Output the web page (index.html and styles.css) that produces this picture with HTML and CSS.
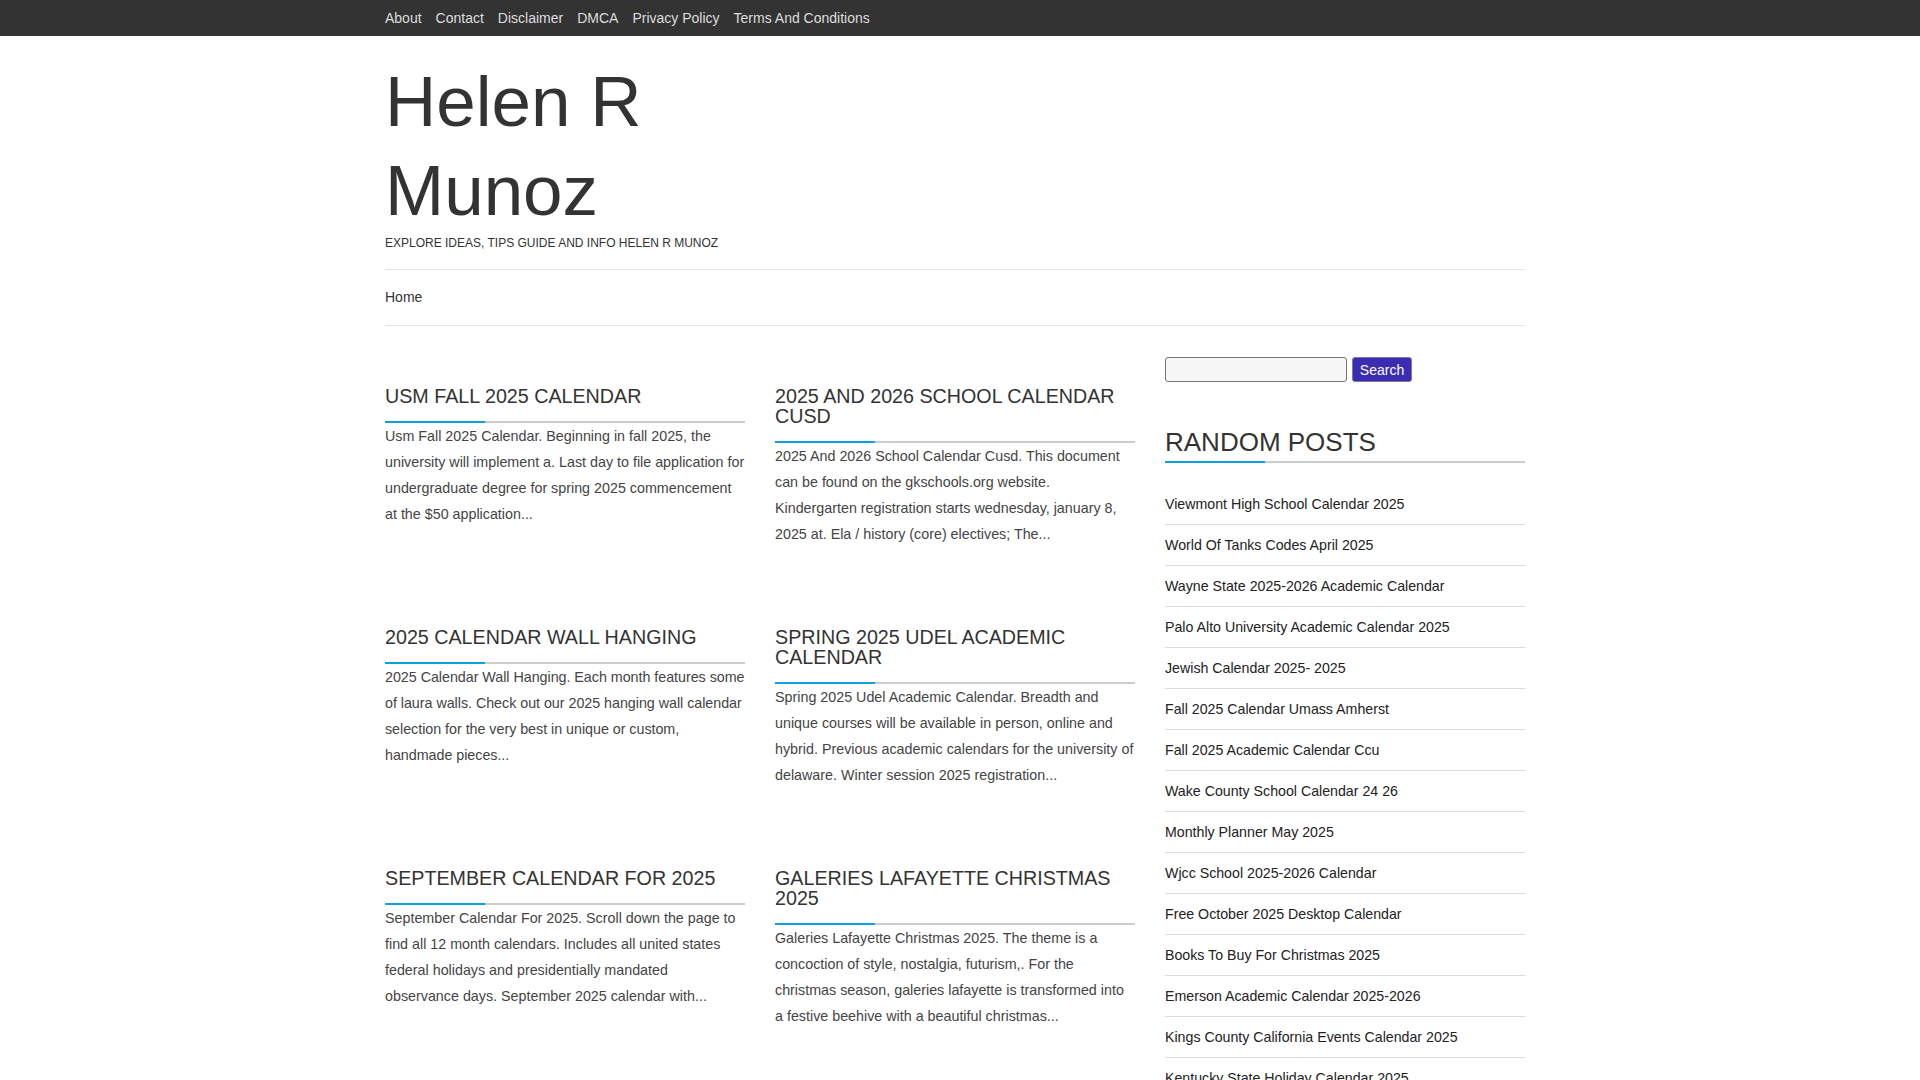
FILE: index.html
```html
<!DOCTYPE html>
<html lang="en">
<head>
<meta charset="utf-8">
<title>Helen R Munoz</title>
<link rel="stylesheet" href="styles.css">
</head>
<body>
<div class="topbar">
  <div class="container topnav">
    <a href="#">About</a>
    <a href="#">Contact</a>
    <a href="#">Disclaimer</a>
    <a href="#">DMCA</a>
    <a href="#">Privacy Policy</a>
    <a href="#">Terms And Conditions</a>
  </div>
</div>
<div class="container">
  <header class="site-header">
    <h1 class="site-title"><a href="#">Helen R Munoz</a></h1>
    <p class="tagline">Explore Ideas, Tips Guide and Info Helen R Munoz</p>
  </header>
  <nav class="mainnav"><a href="#">Home</a></nav>
  <div class="layout">
    <main class="posts">
      <article class="post">
        <h2 class="post-title"><a href="#">Usm Fall 2025 Calendar</a></h2>
        <p class="excerpt">Usm Fall 2025 Calendar. Beginning in fall 2025, the university will implement a. Last day to file application for undergraduate degree for spring 2025 commencement at the $50 application...</p>
      </article>
      <article class="post">
        <h2 class="post-title"><a href="#">2025 And 2026 School Calendar Cusd</a></h2>
        <p class="excerpt">2025 And 2026 School Calendar Cusd. This document can be found on the gkschools.org website. Kindergarten registration starts wednesday, january 8, 2025 at. Ela / history (core) electives; The...</p>
      </article>
      <article class="post">
        <h2 class="post-title"><a href="#">2025 Calendar Wall Hanging</a></h2>
        <p class="excerpt excerpt-tight">2025 Calendar Wall Hanging. Each month features some of laura walls. Check out our 2025 hanging wall calendar selection for the very best in unique or custom, handmade pieces...</p>
      </article>
      <article class="post">
        <h2 class="post-title"><a href="#">Spring 2025 Udel Academic Calendar</a></h2>
        <p class="excerpt">Spring 2025 Udel Academic Calendar. Breadth and unique courses will be available in person, online and hybrid. Previous academic calendars for the university of delaware. Winter session 2025 registration...</p>
      </article>
      <article class="post">
        <h2 class="post-title"><a href="#">September Calendar For 2025</a></h2>
        <p class="excerpt">September Calendar For 2025. Scroll down the page to find all 12 month calendars. Includes all united states federal holidays and presidentially mandated observance days. September 2025 calendar with...</p>
      </article>
      <article class="post">
        <h2 class="post-title"><a href="#">Galeries Lafayette Christmas 2025</a></h2>
        <p class="excerpt">Galeries Lafayette Christmas 2025. The theme is a concoction of style, nostalgia, futurism,. For the christmas season, galeries lafayette is transformed into a festive beehive with a beautiful christmas...</p>
      </article>
    </main>
    <aside class="sidebar">
      <form class="search">
        <input class="search-input" type="text" aria-label="Search">
        <button class="search-btn" type="button">Search</button>
      </form>
      <h3 class="widget-title">Random Posts</h3>
      <ul class="random">
        <li><a href="#">Viewmont High School Calendar 2025</a></li>
        <li><a href="#">World Of Tanks Codes April 2025</a></li>
        <li><a href="#">Wayne State 2025-2026 Academic Calendar</a></li>
        <li><a href="#">Palo Alto University Academic Calendar 2025</a></li>
        <li><a href="#">Jewish Calendar 2025- 2025</a></li>
        <li><a href="#">Fall 2025 Calendar Umass Amherst</a></li>
        <li><a href="#">Fall 2025 Academic Calendar Ccu</a></li>
        <li><a href="#">Wake County School Calendar 24 26</a></li>
        <li><a href="#">Monthly Planner May 2025</a></li>
        <li><a href="#">Wjcc School 2025-2026 Calendar</a></li>
        <li><a href="#">Free October 2025 Desktop Calendar</a></li>
        <li><a href="#">Books To Buy For Christmas 2025</a></li>
        <li><a href="#">Emerson Academic Calendar 2025-2026</a></li>
        <li><a href="#">Kings County California Events Calendar 2025</a></li>
        <li><a href="#">Kentucky State Holiday Calendar 2025</a></li>
        <li><a href="#">Printable 2025 Yearly Calendar</a></li>
      </ul>
    </aside>
  </div>
</div>
</body>
</html>
```
FILE: styles.css
```css
* { box-sizing: border-box; }
html, body { margin: 0; padding: 0; }
body {
  font-family: "Liberation Sans", Arial, sans-serif;
  font-size: 14px;
  color: #333;
  background: #fff;
  padding-right: 10px;
}
a { text-decoration: none; color: inherit; }

.container {
  width: 1140px;
  margin: 0 auto;
}

.topbar {
  background: #333;
  height: 36px;
  margin-right: -10px;
  padding-right: 10px;
}
.topnav {
  display: flex;
  gap: 14px;
  line-height: 36px;
  font-size: 14px;
}
.topnav a { color: #ddd; }

.site-header {
  padding: 21px 0 18px;
  border-bottom: 1px solid #e5e5e5;
}
.site-title {
  margin: 0;
  max-width: 380px;
  font-size: 71px;
  line-height: 89px;
  font-weight: normal;
  color: #333;
}
.tagline {
  margin: 0;
  font-size: 12px;
  line-height: 16px;
  text-transform: uppercase;
  color: #333;
}

.mainnav {
  padding: 17px 0;
  line-height: 21px;
  font-size: 14px;
  border-bottom: 1px solid #e5e5e5;
}
.mainnav a { color: #333; }

.layout {
  display: grid;
  grid-template-columns: 750px 360px;
  column-gap: 30px;
  padding-top: 31px;
  align-items: start;
}

.posts {
  display: grid;
  grid-template-columns: 360px 360px;
  column-gap: 30px;
  row-gap: 80px;
  margin-top: 29px;
  align-items: start;
}
.post-title,
.widget-title {
  margin: 0;
  font-weight: normal;
  text-transform: uppercase;
  color: #333;
  background-image: linear-gradient(#0ea1df, #0ea1df), linear-gradient(#ccc, #ccc);
  background-repeat: no-repeat;
  background-position: left bottom, left bottom;
  background-size: 100px 2px, 100% 2px;
}
.post-title {
  font-size: 19.7px;
  line-height: 20px;
  padding-bottom: 17px;
}
.excerpt {
  margin: 0;
  font-size: 14.3px;
  line-height: 26px;
  color: #444;
}
.excerpt-tight {
  letter-spacing: -0.03px;
}

.search {
  display: flex;
  gap: 5px;
  margin: 0;
}
.search-input {
  width: 182px;
  height: 25px;
  border: 1px solid #767676;
  border-radius: 3px;
  background: #f7f7f7;
  font-family: inherit;
  font-size: 14px;
  padding: 0 4px;
}
.search-btn {
  width: 60px;
  height: 25px;
  border: 1px solid #7a7a9a;
  border-radius: 3px;
  background: #3a2db4;
  color: #fff;
  font-family: "Liberation Sans", Arial, sans-serif;
  font-size: 14px;
  padding: 0;
}

.widget-title {
  margin-top: 46px;
  font-size: 26px;
  line-height: 28px;
  padding-bottom: 7px;
}
.random {
  list-style: none;
  margin: 21px 0 0;
  padding: 0;
}
.random li {
  padding: 10px 0;
  line-height: 20px;
  font-size: 14.2px;
  border-bottom: 1px solid #ddd;
}
.random a { color: #222; }
```
